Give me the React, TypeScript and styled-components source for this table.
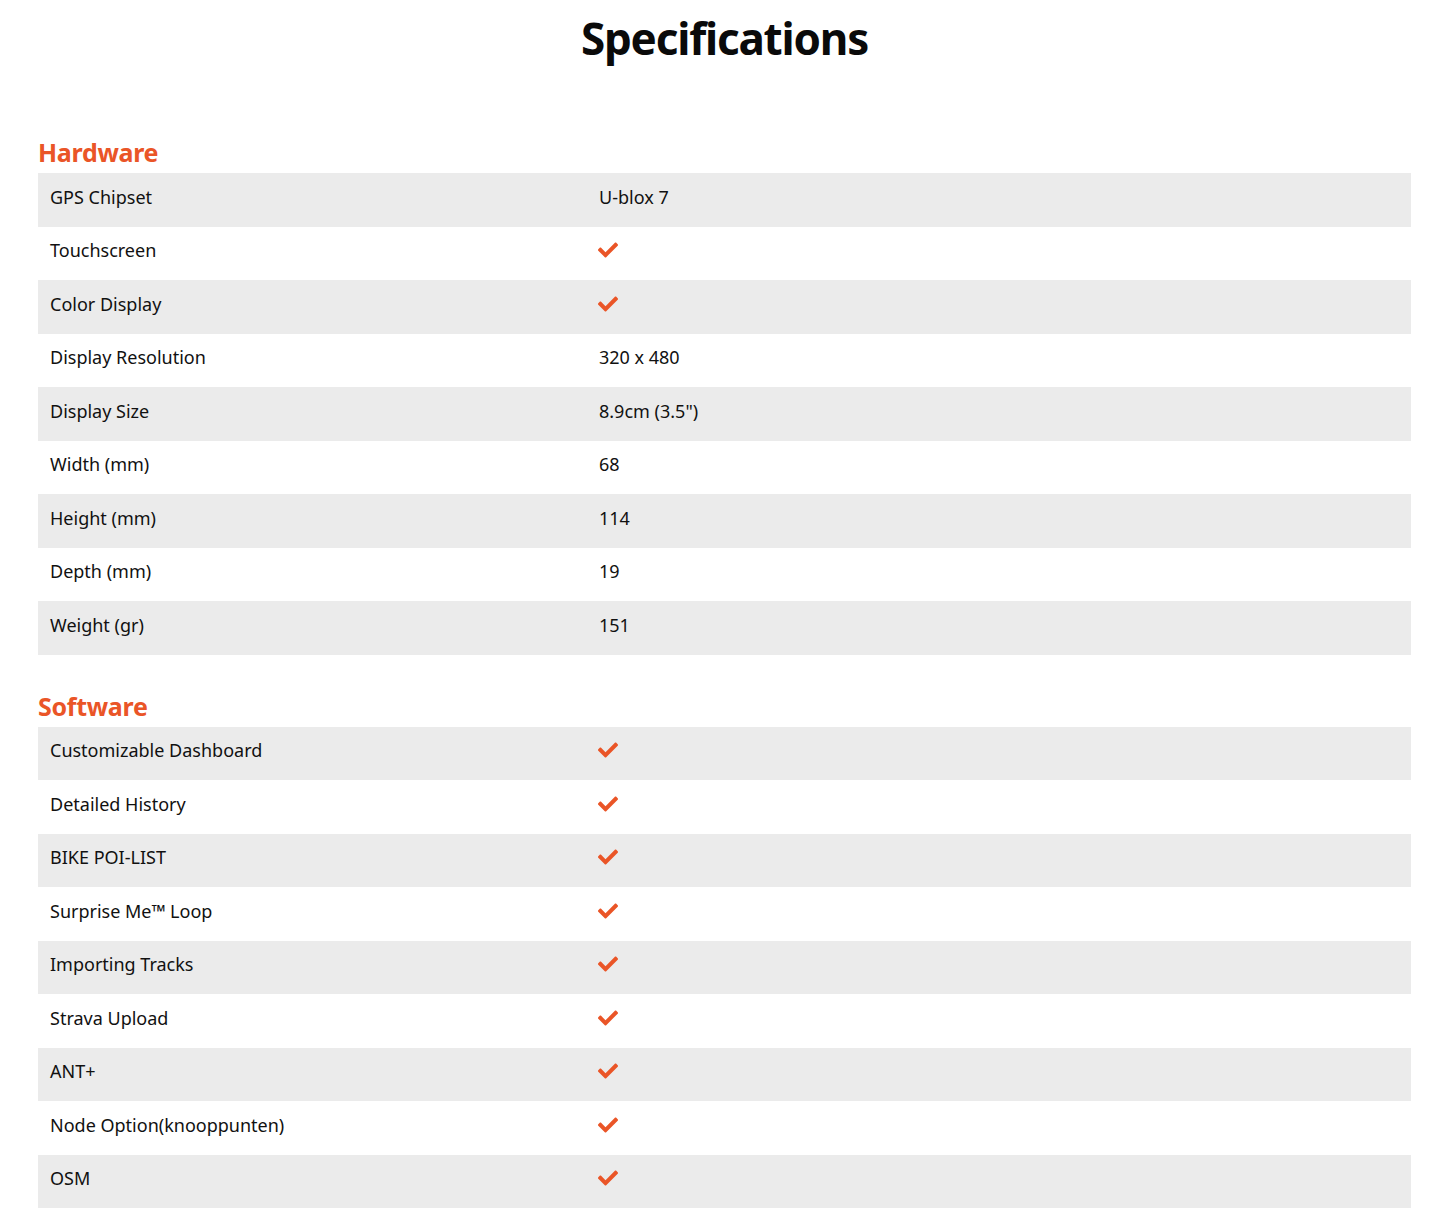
import React from "react";
import styled, { createGlobalStyle } from "styled-components";
import { FaCheck } from "react-icons/fa";

const Global = createGlobalStyle`
  html, body { margin: 0; padding: 0; background: #fff; }
  body { font-family: "Noto Sans", "Open Sans", sans-serif; color: #111; }
`;

const Page = styled.div`
  width: 1373px;
  margin-left: 38px;
  padding-bottom: 13px;
`;

const Title = styled.h1`
  margin: 0;
  height: 76px;
  display: flex;
  align-items: center;
  justify-content: center;
  font-size: 44px;
  font-weight: 700;
  letter-spacing: -1.2px;
  color: #0a0a0a;
`;

const Section = styled.section<{ $first?: boolean }>`
  margin-top: ${(p) => (p.$first ? "59px" : "34px")};
`;

const Heading = styled.h2`
  margin: 0;
  height: 38px;
  padding-bottom: 4px;
  box-sizing: border-box;
  display: flex;
  align-items: center;
  font-size: 25px;
  font-weight: 700;
  color: #ea5527;
  letter-spacing: -0.3px;
`;

const Table = styled.div`
  display: flex;
  flex-direction: column;
`;

const Row = styled.div<{ $shade: boolean }>`
  display: grid;
  grid-template-columns: 549px 1fr;
  height: 53.5px;
  align-items: center;
  background: ${(p) => (p.$shade ? "#ebebeb" : "#ffffff")};
`;

const Cell = styled.div`
  padding-left: 12px;
  padding-bottom: 6px;
  font-size: 18px;
  color: #111;
  display: flex;
  align-items: center;
`;

const Check = styled(FaCheck)`
  color: #ea5527;
  width: 20px;
  height: 20px;
  margin-left: -1px;
`;

type Spec = [string, string | true];

const hardware: Spec[] = [
  ["GPS Chipset", "U-blox 7"],
  ["Touchscreen", true],
  ["Color Display", true],
  ["Display Resolution", "320 x 480"],
  ["Display Size", "8.9cm (3.5\")"],
  ["Width (mm)", "68"],
  ["Height (mm)", "114"],
  ["Depth (mm)", "19"],
  ["Weight (gr)", "151"],
];

const software: Spec[] = [
  ["Customizable Dashboard", true],
  ["Detailed History", true],
  ["BIKE POI-LIST", true],
  ["Surprise Me™ Loop", true],
  ["Importing Tracks", true],
  ["Strava Upload", true],
  ["ANT+", true],
  ["Node Option(knooppunten)", true],
  ["OSM", true],
];

function SpecTable({ rows }: { rows: Spec[] }) {
  return (
    <Table>
      {rows.map(([k, v], i) => (
        <Row key={k} $shade={i % 2 === 0}>
          <Cell>{k}</Cell>
          <Cell>{v === true ? <Check /> : v}</Cell>
        </Row>
      ))}
    </Table>
  );
}

export default function App() {
  return (
    <>
      <Global />
      <Page>
        <Title>Specifications</Title>
        <Section $first>
          <Heading>Hardware</Heading>
          <SpecTable rows={hardware} />
        </Section>
        <Section>
          <Heading>Software</Heading>
          <SpecTable rows={software} />
        </Section>
      </Page>
    </>
  );
}
